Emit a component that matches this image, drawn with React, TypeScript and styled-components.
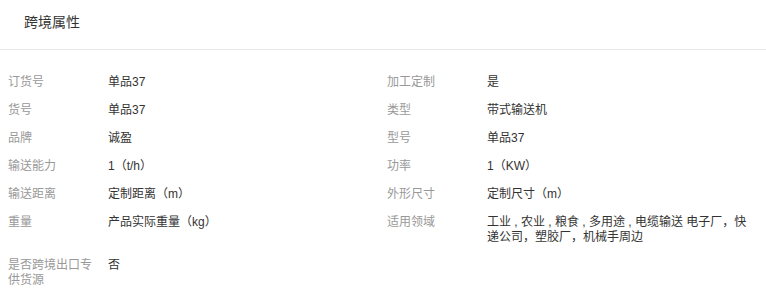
import * as React from "react";
import styled, { createGlobalStyle } from "styled-components";

interface Attr {
  label: string;
  value: string;
}

const rows: Attr[][] = [
  [
    { label: "订货号", value: "单品37" },
    { label: "加工定制", value: "是" },
  ],
  [
    { label: "货号", value: "单品37" },
    { label: "类型", value: "带式输送机" },
  ],
  [
    { label: "品牌", value: "诚盈" },
    { label: "型号", value: "单品37" },
  ],
  [
    { label: "输送能力", value: "1（t/h）" },
    { label: "功率", value: "1（KW）" },
  ],
  [
    { label: "输送距离", value: "定制距离（m）" },
    { label: "外形尺寸", value: "定制尺寸（m）" },
  ],
  [
    { label: "重量", value: "产品实际重量（kg）" },
    {
      label: "适用领域",
      value: "工业 , 农业 , 粮食 , 多用途 , 电缆输送 电子厂，快递公司，塑胶厂，机械手周边",
    },
  ],
  [{ label: "是否跨境出口专供货源", value: "否" }],
];

const App: React.FC = () => {
  return (
    <>
      <GlobalStyle />
      <Panel>
        <Header>
          <Title>跨境属性</Title>
        </Header>
        <Grid>
          {rows.flat().map((item, i) => (
            <Item key={i}>
              <Label>{item.label}</Label>
              <Value>{item.value}</Value>
            </Item>
          ))}
        </Grid>
      </Panel>
    </>
  );
};

const GlobalStyle = createGlobalStyle`
  body {
    margin: 0;
    background: #fff;
    font-family: "Liberation Sans", Arial, "Noto Sans CJK SC", sans-serif;
  }
`;

const Panel = styled.div`
  width: 766px;
  background: #fff;
`;

const Header = styled.div`
  height: 50px;
  display: flex;
  align-items: center;
  padding: 0 24px;
  box-sizing: border-box;
  border-bottom: 1px solid #e8e8e8;
`;

const Title = styled.h3`
  margin: 0;
  margin-top: -8px;
  font-size: 14px;
  font-weight: normal;
  color: #333;
`;

const Grid = styled.div`
  display: grid;
  grid-template-columns: 1fr 1fr;
  column-gap: 8px;
  padding: 19px 8px 0;
`;

const Item = styled.div`
  display: flex;
  padding: 6px 0 7px;
  font-size: 12px;
  line-height: 15px;
`;

const Label = styled.div`
  flex: 0 0 100px;
  padding-right: 12px;
  box-sizing: border-box;
  color: #999;
`;

const Value = styled.div`
  flex: 1;
  color: #333;
`;

export default App;
